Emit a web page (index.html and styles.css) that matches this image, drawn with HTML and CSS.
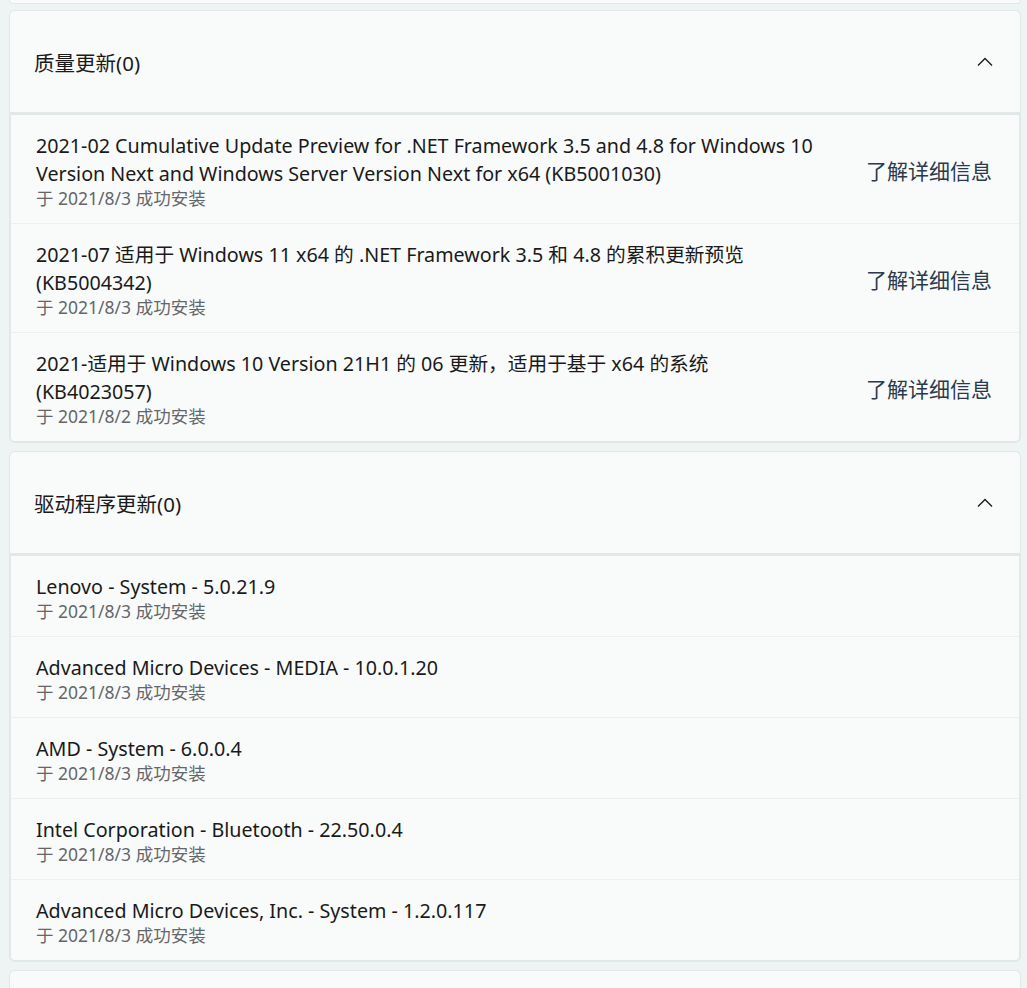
FILE: index.html
```html
<!DOCTYPE html>
<html lang="zh-CN">
<head>
  <meta charset="UTF-8" />
  <meta name="viewport" content="width=device-width, initial-scale=1" />
  <title>更新历史记录</title>
  <link rel="stylesheet" href="styles.css">
</head>
<body>

  <div class="page">
    <div class="card-stub"></div>

    <section class="expander">
      <div class="exp-header">
        <span class="exp-title">质量更新(0)</span>
        <svg class="chevron" width="16" height="10" viewBox="0 0 16 10"><path d="M1 8.5 L8 1.5 L15 8.5" fill="none" stroke="#1b1b1b" stroke-width="1.4"/></svg>
      </div>
      <div class="exp-body">
        <div class="row">
          <div class="row-text">
            <div class="row-title">2021-02 Cumulative Update Preview for .NET Framework 3.5 and 4.8 for Windows 10 Version Next and Windows Server Version Next for x64 (KB5001030)</div>
            <div class="row-sub">于 2021/8/3 成功安装</div>
          </div>
          <a class="row-link" href="#">了解详细信息</a>
        </div>
        <div class="row">
          <div class="row-text">
            <div class="row-title">2021-07 适用于 Windows 11 x64 的 .NET Framework 3.5 和 4.8 的累积更新预览<br>(KB5004342)</div>
            <div class="row-sub">于 2021/8/3 成功安装</div>
          </div>
          <a class="row-link" href="#">了解详细信息</a>
        </div>
        <div class="row">
          <div class="row-text">
            <div class="row-title">2021-适用于 Windows 10 Version 21H1 的 06 更新，适用于基于 x64 的系统<br>(KB4023057)</div>
            <div class="row-sub">于 2021/8/2 成功安装</div>
          </div>
          <a class="row-link" href="#">了解详细信息</a>
        </div>
      </div>
    </section>

    <section class="expander">
      <div class="exp-header">
        <span class="exp-title">驱动程序更新(0)</span>
        <svg class="chevron" width="16" height="10" viewBox="0 0 16 10"><path d="M1 8.5 L8 1.5 L15 8.5" fill="none" stroke="#1b1b1b" stroke-width="1.4"/></svg>
      </div>
      <div class="exp-body">
        <div class="row">
          <div class="row-text">
            <div class="row-title">Lenovo - System - 5.0.21.9</div>
            <div class="row-sub">于 2021/8/3 成功安装</div>
          </div>
        </div>
        <div class="row">
          <div class="row-text">
            <div class="row-title">Advanced Micro Devices - MEDIA - 10.0.1.20</div>
            <div class="row-sub">于 2021/8/3 成功安装</div>
          </div>
        </div>
        <div class="row">
          <div class="row-text">
            <div class="row-title">AMD - System - 6.0.0.4</div>
            <div class="row-sub">于 2021/8/3 成功安装</div>
          </div>
        </div>
        <div class="row">
          <div class="row-text">
            <div class="row-title">Intel Corporation - Bluetooth - 22.50.0.4</div>
            <div class="row-sub">于 2021/8/3 成功安装</div>
          </div>
        </div>
        <div class="row">
          <div class="row-text">
            <div class="row-title">Advanced Micro Devices, Inc. - System - 1.2.0.117</div>
            <div class="row-sub">于 2021/8/3 成功安装</div>
          </div>
        </div>
      </div>
    </section>

    <section class="expander">
      <div class="exp-header"></div>
    </section>
  </div>

</body>
</html>
```

FILE: styles.css
```css
* {
  margin: 0; padding: 0; box-sizing: border-box;
}
html, body {
  height: 100%;
  overflow: hidden;
  background: #eef3f3;
  color: #1a1a1a;
  font-family: "Noto Sans", "Noto Sans CJK SC", sans-serif;
}

.page {
  padding: 0 6px 0 9px;
}

.card-stub {
  height: 4px;
  background: #f9fbfb;
  border: 1px solid #e2e7e7;
  border-top: none;
  border-radius: 0 0 6px 6px;
  margin-bottom: 6px;
}

.expander {
  margin-bottom: 8px;
}

.exp-header {
  height: 102px;
  display: flex;
  align-items: center;
  justify-content: space-between;
  padding: 0 27px 0 24px;
  background: #f9fbfb;
  border: 1px solid #e2e7e7;
  border-bottom: none;
  border-radius: 6px 6px 0 0;
}

.exp-title {
  font-size: 20.5px;
}

.chevron {
  display: block;
}

.exp-body {
  background: #f9fbfb;
  border: 2px solid #e2e7e7;
  border-top-width: 3px;
  border-radius: 0 0 6px 6px;
}

.row {
  display: flex;
  align-items: center;
  gap: 20px;
  padding: 17px 27px 15px 25px;
  border-bottom: 1px solid #ebf0f0;
}
.row:last-child {
  border-bottom: none;
}

.row-text {
  flex: 1;
}

.row-title {
  font-size: 19.7px;
  line-height: 28px;
}

.row-sub {
  font-size: 17.5px;
  line-height: 20px;
  color: #64676a;
}

.row-link {
  font-size: 21px;
  color: #2a3a4c;
  text-decoration: none;
  white-space: nowrap;
}
```
